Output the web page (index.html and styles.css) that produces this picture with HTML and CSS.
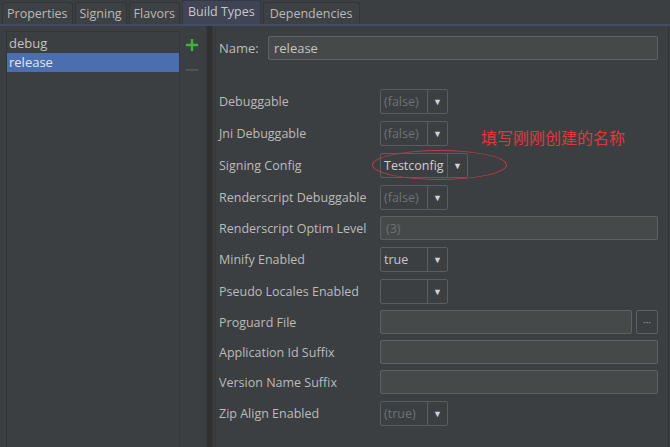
FILE: index.html
```html
<!DOCTYPE html>
<html>
<head>
<meta charset="utf-8">
<link rel="stylesheet" href="styles.css">
</head>
<body>
<div class="app">
  <div class="tabs">
    <div class="tab">Properties</div>
    <div class="tab">Signing</div>
    <div class="tab">Flavors</div>
    <div class="tab active">Build Types</div>
    <div class="tab">Dependencies</div>
  </div>
  <div class="main">
    <div class="list">
      <div class="item">debug</div>
      <div class="item selected">release</div>
    </div>
    <div class="tools">
      <svg class="tool" width="14" height="14" viewBox="0 0 14 14"><path d="M7 1v12M1 7h12" stroke="#3fb13f" stroke-width="2.4"/></svg>
      <svg class="tool" width="14" height="14" viewBox="0 0 14 14"><path d="M1 7h12" stroke="#57595b" stroke-width="1.6"/></svg>
    </div>
    <div class="splitter"></div>
    <div class="form">
      <div class="name-row">
        <span class="name-label">Name:</span>
        <div class="field name-field">release</div>
      </div>
      <div class="grid">
        <div class="label">Debuggable</div>
        <div class="ctl"><div class="combo"><span class="val dis">(false)</span><span class="btn">▼</span></div></div>
        <div class="label">Jni Debuggable</div>
        <div class="ctl"><div class="combo"><span class="val dis">(false)</span><span class="btn">▼</span></div><span class="note">填写刚刚创建的名称</span></div>
        <div class="label">Signing Config</div>
        <div class="ctl"><div class="combo wide"><span class="val">Testconfig</span><span class="btn">▼</span></div><div class="ellipse"></div></div>
        <div class="label">Renderscript Debuggable</div>
        <div class="ctl"><div class="combo"><span class="val dis">(false)</span><span class="btn">▼</span></div></div>
        <div class="label">Renderscript Optim Level</div>
        <div class="ctl"><div class="field full dis">(3)</div></div>
        <div class="label">Minify Enabled</div>
        <div class="ctl"><div class="combo"><span class="val">true</span><span class="btn">▼</span></div></div>
        <div class="label">Pseudo Locales Enabled</div>
        <div class="ctl"><div class="combo"><span class="val"></span><span class="btn">▼</span></div></div>
        <div class="label">Proguard File</div>
        <div class="ctl"><div class="field grow"></div><div class="dots">···</div></div>
        <div class="label">Application Id Suffix</div>
        <div class="ctl"><div class="field full"></div></div>
        <div class="label">Version Name Suffix</div>
        <div class="ctl"><div class="field full"></div></div>
        <div class="label">Zip Align Enabled</div>
        <div class="ctl"><div class="combo"><span class="val dis">(true)</span><span class="btn">▼</span></div></div>
      </div>
    </div>
  </div>
</div>
</body>
</html>
```

FILE: styles.css
```css
html, body {
  margin: 0;
  padding: 0;
  background: #3c3f41;
}
.app {
  width: 670px;
  height: 447px;
  overflow: hidden;
  font-family: "Open Sans", "Noto Sans", sans-serif;
  font-size: 12.5px;
  color: #bbbbbb;
  background: #3c3f41;
}
.tabs {
  display: flex;
  align-items: flex-end;
  height: 24px;
  padding-left: 2px;
  border-bottom: 2px solid #474a63;
  box-sizing: content-box;
}
.tab {
  height: 21px;
  line-height: 21px;
  padding: 0 4px;
  margin-right: 2px;
  background: #3e4143;
  border: 1px solid #333537;
  border-bottom: none;
  border-radius: 3px 3px 0 0;
  color: #b9b9b9;
  font-size: 12.5px;
}
.tab.active {
  height: 23px;
  line-height: 22px;
  padding: 0 5px;
  background: #3f4555;
  border-color: #353945;
  color: #c4c8d0;
}
.tab:last-child {
  padding: 0 6px;
}
.main {
  display: flex;
  height: 421px;
}
.list {
  margin: 5px 0 0 6px;
  width: 172px;
  border-left: 1px solid #323436;
  border-top: 1px solid #333537;
  background: #3c3f41;
  padding-top: 2px;
}
.item {
  height: 19px;
  line-height: 18px;
  padding-left: 2px;
  color: #c2c2c2;
  font-size: 13px;
}
.item.selected {
  background: #4b6eaf;
  color: #e6e6e6;
}
.tools {
  width: 25px;
  margin-top: 6px;
  border-left: 1px solid #36383a;
  border-right: 1px solid #36383a;
  display: flex;
  flex-direction: column;
  align-items: center;
  padding-top: 6px;
  gap: 11px;
  box-sizing: border-box;
}
.splitter {
  width: 5px;
  margin: 0 2px 0 2px;
  background-image: radial-gradient(circle, #2e3032 0.8px, transparent 1px);
  background-size: 2px 2px;
  border-left: 1px solid #353739;
  border-right: 1px solid #353739;
}
.form {
  flex: 1;
  padding: 7px 10px 0 3px;
  border-left: 1px solid #36383a;
  border-right: 1px solid #323436;
  margin-right: 1px;
}
.name-row {
  display: flex;
  align-items: center;
  height: 29px;
}
.name-label {
  width: 49px;
  font-size: 13px;
}
.name-field {
  flex: 1;
  height: 29px;
  font-size: 13px;
  color: #c4c4c4;
}
.field {
  box-sizing: border-box;
  height: 24px;
  border: 1px solid #5e6162;
  border-radius: 2px;
  background: #45494a;
  display: flex;
  align-items: center;
  padding-left: 5px;
}
.grid {
  display: grid;
  grid-template-columns: 161px 1fr;
  grid-template-rows: 32px 32px 32px 32px 30px 32px 32px 30px 30px 30px 32px;
  margin-top: 23px;
}
.label {
  display: flex;
  align-items: center;
  font-size: 12.5px;
  white-space: nowrap;
}
.ctl {
  display: flex;
  align-items: center;
  position: relative;
}
.combo {
  box-sizing: border-box;
  width: 68px;
  height: 25px;
  display: flex;
  border: 1px solid #5a5d5f;
  border-radius: 2px;
  background: #3c3f41;
}
.combo.wide {
  width: 88px;
}
.combo .val {
  flex: 1;
  display: flex;
  align-items: center;
  padding-left: 3px;
  color: #c8c8c8;
}
.combo.wide .val {
  color: #d0d0d0;
}
.combo .btn {
  width: 19px;
  border-left: 1px solid #5a5d5f;
  display: flex;
  align-items: center;
  justify-content: center;
  font-size: 9px;
  color: #d4d4d4;
}
.dis {
  color: #6f7274 !important;
}
.full {
  flex: 1;
}
.grow {
  flex: 1;
}
.dots {
  box-sizing: border-box;
  width: 22px;
  height: 24px;
  margin-left: 4px;
  border: 1px solid #5e6162;
  border-radius: 2px;
  display: flex;
  align-items: center;
  justify-content: center;
  font-size: 10px;
  color: #a0a0a0;
}
.note {
  position: absolute;
  left: 101px;
  top: 8px;
  font-family: "Noto Sans CJK SC", sans-serif;
  font-size: 16px;
  color: #e2363c;
  white-space: nowrap;
}
.ellipse {
  position: absolute;
  left: -8px;
  top: 1px;
  width: 135px;
  height: 30px;
  border: 1px solid #c53a44;
  border-radius: 50%;
  box-sizing: border-box;
}
```
